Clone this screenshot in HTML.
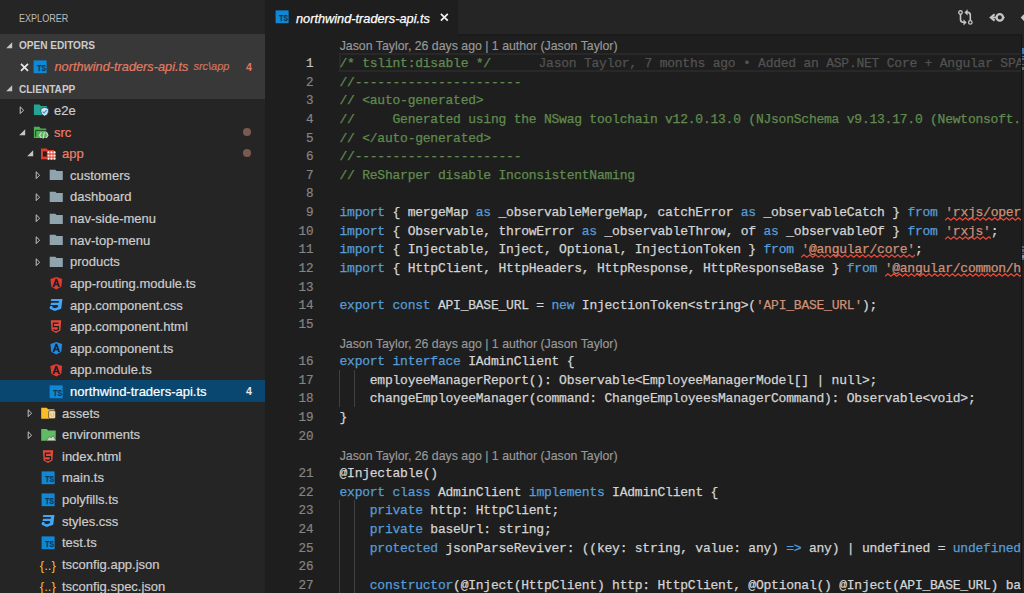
<!DOCTYPE html><html><head><meta charset="utf-8"><style>

html,body{margin:0;padding:0;}
body{width:1024px;height:593px;overflow:hidden;background:#1e1e1e;position:relative;font-family:"Liberation Sans",sans-serif;}
.abs{position:absolute;white-space:pre;}
.sb{position:absolute;left:0;top:0;width:265px;height:593px;background:#252526;overflow:hidden;}
.lbl{position:absolute;white-space:pre;font-size:13px;color:#cccccc;-webkit-text-stroke:0.2px currentColor;line-height:21.64px;height:21.64px;}
.code{position:absolute;left:339.5px;white-space:pre;font-family:"Liberation Mono",monospace;font-size:13px;letter-spacing:-0.2303px;color:#d4d4d4;-webkit-text-stroke:0.25px currentColor;height:18.69px;line-height:18.69px;}
.ln{position:absolute;left:280px;width:33.7px;text-align:right;white-space:pre;font-family:"Liberation Mono",monospace;font-size:12.62px;color:#858585;-webkit-text-stroke:0.2px currentColor;height:18.69px;line-height:18.69px;}
.k{color:#569cd6}.s{color:#ce9178}.c{color:#608b4e}
.lens{position:absolute;left:339.7px;white-space:pre;font-size:12.32px;color:#999999;-webkit-text-stroke:0.15px currentColor;height:18.69px;line-height:18.69px;}


</style></head><body>
<div class="sb">
<div class="abs" style="left:19.4px;top:0.8px;height:34.4px;line-height:34.4px;font-size:10.6px;color:#bbbbbb;transform-origin:0 50%;transform:scaleX(0.855)">EXPLORER</div>
<div class="abs" style="left:0;top:34.4px;width:265px;height:64.5px;background:#383838"></div>
<svg style="position:absolute;left:5.7px;top:42.2px" width="7" height="7" viewBox="0 0 7 7"><path d="M6.2 0.2 V6.2 H0.2 Z" fill="#c5c5c5"/></svg>
<div class="abs" style="left:18.9px;top:35.4px;height:21.64px;line-height:21.64px;font-size:10.1px;font-weight:bold;color:#cccccc">OPEN EDITORS</div>
<svg style="position:absolute;left:19.5px;top:63px" width="10" height="9" viewBox="0 0 10 9"><path d="M1 0.8 L8 7.8 M8 0.8 L1 7.8" stroke="#e8e8e8" stroke-width="1.7"/></svg>
<svg style="position:absolute;left:30.4px;top:55.8px" width="20" height="22" viewBox="0 0 20 22"><rect x="3.6" y="4.4" width="13" height="12.8" fill="#0f88d8"/><text x="15.9" y="15.3" textLength="8.6" lengthAdjust="spacingAndGlyphs" text-anchor="end" font-family="Liberation Sans" font-weight="bold" font-size="8.2" stroke="#17324d" stroke-width="0.25" fill="#17324d">TS</text></svg>
<div class="lbl" style="left:54.5px;top:56.04px;font-style:italic;font-size:12.75px;color:#e27b64">northwind-traders-api.ts</div>
<div class="lbl" style="left:193.4px;top:56.04px;font-style:italic;font-size:11px;color:#d0735d">src\app</div>
<div class="lbl" style="left:246px;top:56.6px;font-size:10.6px;font-weight:bold;-webkit-text-stroke:0px;color:#dd7a63">4</div>
<svg style="position:absolute;left:5.7px;top:85.1px" width="7" height="7" viewBox="0 0 7 7"><path d="M6.2 0.2 V6.2 H0.2 Z" fill="#c5c5c5"/></svg>
<div class="abs" style="left:18.9px;top:78.6px;height:21.64px;line-height:21.64px;font-size:10.1px;font-weight:bold;color:#cccccc">CLIENTAPP</div>
<svg style="position:absolute;left:18.9px;top:106.2px" width="6" height="9" viewBox="0 0 6 9"><path d="M1.2 0.8 L4.6 4.2 L1.2 7.6 Z" fill="none" stroke="#c5c5c5" stroke-width="1"/></svg>
<svg style="position:absolute;left:30px;top:99.3px" width="20" height="22" viewBox="0 0 20 22"><path d="M3.9 5.4 H9.5 L10.8 6.9 H16.9 V15.9 H3.9 Z" fill="#22a592"/><path d="M14.65 8.4 L18.4 9.6 V12.4 Q18.4 15.6 14.65 17.1 Q10.9 15.6 10.9 12.4 V9.6 Z" fill="#cfe6f3" stroke="#252526" stroke-width="0.6"/><path d="M12.6 12.6 L14.1 14 L16.7 11.2" stroke="#3b8fd6" stroke-width="1.2" fill="none"/></svg>
<div class="lbl" style="left:54.0px;top:100.00px;color:#cccccc">e2e</div>
<svg style="position:absolute;left:18.6px;top:128.64px" width="7" height="7" viewBox="0 0 7 7"><path d="M6.2 0.2 V6.2 H0.2 Z" fill="#c5c5c5"/></svg>
<svg style="position:absolute;left:30px;top:120.94px" width="20" height="22" viewBox="0 0 20 22"><path d="M3.9 5.8 H9.4 L10.7 7.4 H16.2 V17 H3.9 Z" fill="#4caf50"/><path d="M16.4 9.4 H5.7 V15.8" fill="none" stroke="#1f3a20" stroke-width="0.9"/><path d="M8.6 11.4 L17.8 11.4 L17 17 L6.2 17 Z" fill="#56b85a"/><path d="M11.4 11.4 L9.6 14.2 L11.4 17 M16.2 11.4 L18 14.2 L16.2 17 M14.4 10.8 L13 17.6" stroke="#d8d8d8" stroke-width="1.1" fill="none"/></svg>
<div class="lbl" style="left:54.0px;top:121.62px;color:#ea8069">src</div>
<div class="abs" style="left:243.3px;top:127.74px;width:8px;height:8px;border-radius:50%;background:#7a5a50"></div>
<svg style="position:absolute;left:26.6px;top:150.27999999999997px" width="7" height="7" viewBox="0 0 7 7"><path d="M6.2 0.2 V6.2 H0.2 Z" fill="#c5c5c5"/></svg>
<svg style="position:absolute;left:38px;top:142.57999999999998px" width="20" height="22" viewBox="0 0 20 22"><path d="M3 5.4 H8.6 L9.9 6.9 H16.1 V16.3 H3 Z" fill="#e53a2c"/><rect x="4.9" y="8.4" width="3.9" height="5.2" fill="#2a1d1d"/><rect x="9.6" y="8.6" width="8" height="7.8" fill="#ea6a5a"/><circle cx="10.5" cy="9.3" r="0.95" fill="#ffffff"/><circle cx="10.5" cy="12.6" r="0.95" fill="#ffffff"/><circle cx="10.5" cy="15.7" r="0.95" fill="#ffffff"/><circle cx="13.5" cy="9.3" r="0.95" fill="#ffffff"/><circle cx="13.5" cy="12.6" r="0.95" fill="#ffffff"/><circle cx="13.5" cy="15.7" r="0.95" fill="#ffffff"/><circle cx="16.5" cy="9.3" r="0.95" fill="#ffffff"/><circle cx="16.5" cy="12.6" r="0.95" fill="#ffffff"/><circle cx="16.5" cy="15.7" r="0.95" fill="#ffffff"/></svg>
<div class="lbl" style="left:62.0px;top:143.23px;color:#ea8069">app</div>
<div class="abs" style="left:243.3px;top:149.38px;width:8px;height:8px;border-radius:50%;background:#7a5a50"></div>
<svg style="position:absolute;left:34.9px;top:171.12px" width="6" height="9" viewBox="0 0 6 9"><path d="M1.2 0.8 L4.6 4.2 L1.2 7.6 Z" fill="none" stroke="#c5c5c5" stroke-width="1"/></svg>
<svg style="position:absolute;left:46px;top:164.22px" width="20" height="22" viewBox="0 0 20 22"><path d="M3.7 5.7 H9.3 L10.6 7.1 H16.8 V15.9 H3.7 Z" fill="#90a4ae"/></svg>
<div class="lbl" style="left:70.0px;top:164.85px;color:#cccccc">customers</div>
<svg style="position:absolute;left:34.9px;top:192.76000000000002px" width="6" height="9" viewBox="0 0 6 9"><path d="M1.2 0.8 L4.6 4.2 L1.2 7.6 Z" fill="none" stroke="#c5c5c5" stroke-width="1"/></svg>
<svg style="position:absolute;left:46px;top:185.86px" width="20" height="22" viewBox="0 0 20 22"><path d="M3.7 5.7 H9.3 L10.6 7.1 H16.8 V15.9 H3.7 Z" fill="#90a4ae"/></svg>
<div class="lbl" style="left:70.0px;top:186.47px;color:#cccccc">dashboard</div>
<svg style="position:absolute;left:34.9px;top:214.4px" width="6" height="9" viewBox="0 0 6 9"><path d="M1.2 0.8 L4.6 4.2 L1.2 7.6 Z" fill="none" stroke="#c5c5c5" stroke-width="1"/></svg>
<svg style="position:absolute;left:46px;top:207.5px" width="20" height="22" viewBox="0 0 20 22"><path d="M3.7 5.7 H9.3 L10.6 7.1 H16.8 V15.9 H3.7 Z" fill="#90a4ae"/></svg>
<div class="lbl" style="left:70.0px;top:208.09px;color:#cccccc">nav-side-menu</div>
<svg style="position:absolute;left:34.9px;top:236.04px" width="6" height="9" viewBox="0 0 6 9"><path d="M1.2 0.8 L4.6 4.2 L1.2 7.6 Z" fill="none" stroke="#c5c5c5" stroke-width="1"/></svg>
<svg style="position:absolute;left:46px;top:229.14px" width="20" height="22" viewBox="0 0 20 22"><path d="M3.7 5.7 H9.3 L10.6 7.1 H16.8 V15.9 H3.7 Z" fill="#90a4ae"/></svg>
<div class="lbl" style="left:70.0px;top:229.70px;color:#cccccc">nav-top-menu</div>
<svg style="position:absolute;left:34.9px;top:257.68px" width="6" height="9" viewBox="0 0 6 9"><path d="M1.2 0.8 L4.6 4.2 L1.2 7.6 Z" fill="none" stroke="#c5c5c5" stroke-width="1"/></svg>
<svg style="position:absolute;left:46px;top:250.78000000000003px" width="20" height="22" viewBox="0 0 20 22"><path d="M3.7 5.7 H9.3 L10.6 7.1 H16.8 V15.9 H3.7 Z" fill="#90a4ae"/></svg>
<div class="lbl" style="left:70.0px;top:251.32px;color:#cccccc">products</div>
<svg style="position:absolute;left:46px;top:272.42px" width="20" height="22" viewBox="0 0 20 22"><path d="M10.3 4.9 L16.2 7.0 L15.3 14.8 L10.3 17.4 L5.3 14.8 L4.4 7.0 Z" fill="#e23a30"/><path fill-rule="evenodd" d="M9.5 6.8 H11.1 L14.1 15 H12.2 L11.6 13.2 H9 L8.4 15 H6.5 Z M9.5 11.8 H11.1 L10.3 9.4 Z" fill="#1b2028"/></svg>
<div class="lbl" style="left:70.0px;top:272.94px;color:#cccccc">app-routing.module.ts</div>
<svg style="position:absolute;left:46px;top:294.06px" width="20" height="22" viewBox="0 0 20 22"><path d="M5.2 4.9 H16.5 L15.2 14.7 L8.8 16.9 L3.6 14.7 L4 12.1 H6.4 L6.3 13.3 L8.8 14.3 L11.8 13.3 L12.2 10.9 H4.6 L5 8.7 H12.6 L12.9 6.9 H4.9 Z" fill="#42a5f5"/></svg>
<div class="lbl" style="left:70.0px;top:294.56px;color:#cccccc">app.component.css</div>
<svg style="position:absolute;left:46px;top:315.7px" width="20" height="22" viewBox="0 0 20 22"><path d="M4.8 4.3 H15.2 L14.4 14.5 L10 16.9 L5.6 14.5 Z" fill="#e8473a"/><path d="M12.6 7.2 H7.4 V10.6 H12.4 V13.6 L9.9 14.6 L7.4 13.6" fill="none" stroke="#1e1e1e" stroke-width="1.3"/></svg>
<div class="lbl" style="left:70.0px;top:316.17px;color:#cccccc">app.component.html</div>
<svg style="position:absolute;left:46px;top:337.34000000000003px" width="20" height="22" viewBox="0 0 20 22"><path d="M10.3 4.9 L16.2 7.0 L15.3 14.8 L10.3 17.4 L5.3 14.8 L4.4 7.0 Z" fill="#1e8ae6"/><path fill-rule="evenodd" d="M9.5 6.8 H11.1 L14.1 15 H12.2 L11.6 13.2 H9 L8.4 15 H6.5 Z M9.5 11.8 H11.1 L10.3 9.4 Z" fill="#1b2028"/></svg>
<div class="lbl" style="left:70.0px;top:337.79px;color:#cccccc">app.component.ts</div>
<svg style="position:absolute;left:46px;top:358.98px" width="20" height="22" viewBox="0 0 20 22"><path d="M10.3 4.9 L16.2 7.0 L15.3 14.8 L10.3 17.4 L5.3 14.8 L4.4 7.0 Z" fill="#e23a30"/><path fill-rule="evenodd" d="M9.5 6.8 H11.1 L14.1 15 H12.2 L11.6 13.2 H9 L8.4 15 H6.5 Z M9.5 11.8 H11.1 L10.3 9.4 Z" fill="#1b2028"/></svg>
<div class="lbl" style="left:70.0px;top:359.41px;color:#cccccc">app.module.ts</div>
<div class="abs" style="left:0;top:380.12px;width:265px;height:22.14px;background:#094771"></div>
<svg style="position:absolute;left:46px;top:380.62px" width="20" height="22" viewBox="0 0 20 22"><rect x="3.6" y="4.4" width="13" height="12.8" fill="#0f88d8"/><text x="15.9" y="15.3" textLength="8.6" lengthAdjust="spacingAndGlyphs" text-anchor="end" font-family="Liberation Sans" font-weight="bold" font-size="8.2" stroke="#17324d" stroke-width="0.25" fill="#17324d">TS</text></svg>
<div class="lbl" style="left:70.0px;top:381.02px;color:#ffffff">northwind-traders-api.ts</div>
<div class="lbl" style="left:246px;top:381.22px;font-size:10.6px;font-weight:bold;-webkit-text-stroke:0px;color:#e8e8e8">4</div>
<svg style="position:absolute;left:26.9px;top:409.16px" width="6" height="9" viewBox="0 0 6 9"><path d="M1.2 0.8 L4.6 4.2 L1.2 7.6 Z" fill="none" stroke="#c5c5c5" stroke-width="1"/></svg>
<svg style="position:absolute;left:38px;top:402.26000000000005px" width="20" height="22" viewBox="0 0 20 22"><path d="M3.2 5.7 H8.8 L10.1 7.2 H16.4 V16.7 H3.2 Z" fill="#f9bd2b"/><rect x="10.6" y="8.6" width="7" height="8" rx="1.6" fill="#e9dcb8" stroke="#252526" stroke-width="0.6"/><path d="M12.6 11 Q12.4 14.6 14.6 14.8 M15.4 10.4 Q16.2 12.4 15.4 14.6" stroke="#f2b530" stroke-width="1" fill="none"/></svg>
<div class="lbl" style="left:62.0px;top:402.64px;color:#cccccc">assets</div>
<svg style="position:absolute;left:26.9px;top:430.8px" width="6" height="9" viewBox="0 0 6 9"><path d="M1.2 0.8 L4.6 4.2 L1.2 7.6 Z" fill="none" stroke="#c5c5c5" stroke-width="1"/></svg>
<svg style="position:absolute;left:38px;top:423.90000000000003px" width="20" height="22" viewBox="0 0 20 22"><path d="M3.2 5.1 H8.8 L10.1 6.6 H17.7 V16.7 H3.2 Z" fill="#60bb62"/><path d="M8.2 16.7 L11.6 12.6 L13.2 14 L15 11.6 L18.2 16.7 Z" fill="#d6d6d6" stroke="#2a4a2a" stroke-width="0.5"/></svg>
<div class="lbl" style="left:62.0px;top:424.26px;color:#cccccc">environments</div>
<svg style="position:absolute;left:38px;top:445.54px" width="20" height="22" viewBox="0 0 20 22"><path d="M4.8 4.3 H15.2 L14.4 14.5 L10 16.9 L5.6 14.5 Z" fill="#e8473a"/><path d="M12.6 7.2 H7.4 V10.6 H12.4 V13.6 L9.9 14.6 L7.4 13.6" fill="none" stroke="#1e1e1e" stroke-width="1.3"/></svg>
<div class="lbl" style="left:62.0px;top:445.88px;color:#cccccc">index.html</div>
<svg style="position:absolute;left:38px;top:467.18px" width="20" height="22" viewBox="0 0 20 22"><rect x="3.6" y="4.4" width="13" height="12.8" fill="#0f88d8"/><text x="15.9" y="15.3" textLength="8.6" lengthAdjust="spacingAndGlyphs" text-anchor="end" font-family="Liberation Sans" font-weight="bold" font-size="8.2" stroke="#17324d" stroke-width="0.25" fill="#17324d">TS</text></svg>
<div class="lbl" style="left:62.0px;top:467.49px;color:#cccccc">main.ts</div>
<svg style="position:absolute;left:38px;top:488.82px" width="20" height="22" viewBox="0 0 20 22"><rect x="3.6" y="4.4" width="13" height="12.8" fill="#0f88d8"/><text x="15.9" y="15.3" textLength="8.6" lengthAdjust="spacingAndGlyphs" text-anchor="end" font-family="Liberation Sans" font-weight="bold" font-size="8.2" stroke="#17324d" stroke-width="0.25" fill="#17324d">TS</text></svg>
<div class="lbl" style="left:62.0px;top:489.11px;color:#cccccc">polyfills.ts</div>
<svg style="position:absolute;left:38px;top:510.46000000000004px" width="20" height="22" viewBox="0 0 20 22"><path d="M5.2 4.9 H16.5 L15.2 14.7 L8.8 16.9 L3.6 14.7 L4 12.1 H6.4 L6.3 13.3 L8.8 14.3 L11.8 13.3 L12.2 10.9 H4.6 L5 8.7 H12.6 L12.9 6.9 H4.9 Z" fill="#42a5f5"/></svg>
<div class="lbl" style="left:62.0px;top:510.73px;color:#cccccc">styles.css</div>
<svg style="position:absolute;left:38px;top:532.1px" width="20" height="22" viewBox="0 0 20 22"><rect x="3.6" y="4.4" width="13" height="12.8" fill="#0f88d8"/><text x="15.9" y="15.3" textLength="8.6" lengthAdjust="spacingAndGlyphs" text-anchor="end" font-family="Liberation Sans" font-weight="bold" font-size="8.2" stroke="#17324d" stroke-width="0.25" fill="#17324d">TS</text></svg>
<div class="lbl" style="left:62.0px;top:532.35px;color:#cccccc">test.ts</div>
<svg style="position:absolute;left:38px;top:553.74px" width="20" height="22" viewBox="0 0 20 22"><text x="9.8" y="15.6" text-anchor="middle" textLength="16" lengthAdjust="spacingAndGlyphs" font-family="Liberation Sans" font-size="13.5" fill="#f7ba2a">{..}</text></svg>
<div class="lbl" style="left:62.0px;top:553.96px;color:#cccccc">tsconfig.app.json</div>
<svg style="position:absolute;left:38px;top:575.38px" width="20" height="22" viewBox="0 0 20 22"><text x="9.8" y="15.6" text-anchor="middle" textLength="16" lengthAdjust="spacingAndGlyphs" font-family="Liberation Sans" font-size="13.5" fill="#f7ba2a">{..}</text></svg>
<div class="lbl" style="left:62.0px;top:575.58px;color:#cccccc">tsconfig.spec.json</div>
</div>
<div class="abs" style="left:265px;top:0;width:759px;height:34.4px;background:#252526"></div>
<div class="abs" style="left:265px;top:0;width:193px;height:34.4px;background:#1e1e1e"></div>
<svg style="position:absolute;left:272.4px;top:5.6px" width="20" height="22" viewBox="0 0 20 22"><rect x="3.6" y="4.4" width="13" height="12.8" fill="#0f88d8"/><text x="15.9" y="15.3" textLength="8.6" lengthAdjust="spacingAndGlyphs" text-anchor="end" font-family="Liberation Sans" font-weight="bold" font-size="8.2" stroke="#17324d" stroke-width="0.25" fill="#17324d">TS</text></svg>
<div class="abs" style="left:296px;top:1.6px;height:34.4px;line-height:34.4px;font-size:12.75px;font-style:italic;color:#ffffff;-webkit-text-stroke:0.25px currentColor">northwind-traders-api.ts</div>
<svg style="position:absolute;left:440px;top:13.4px" width="9" height="8.5" viewBox="0 0 9 8.5"><path d="M0.9 0.9 L7.8 7.6 M7.8 0.9 L0.9 7.6" stroke="#f0f0f0" stroke-width="1.8"/></svg>
<svg style="position:absolute;left:954px;top:6px" width="24" height="22" viewBox="0 0 24 22"><circle cx="6.5" cy="6.5" r="1.75" fill="none" stroke="#c5c5c5" stroke-width="1.3"/><path d="M6.5 8.2 V13.6 Q6.5 16.2 9 16.2 H10.4" fill="none" stroke="#c5c5c5" stroke-width="1.6"/><path d="M9.5 13.2 L12.6 16.4 L9.5 19.6 Z" fill="#c5c5c5"/><circle cx="16.3" cy="16.4" r="1.75" fill="none" stroke="#c5c5c5" stroke-width="1.3"/><path d="M16.3 14.7 V9.2 Q16.3 6.4 13.6 6.4 H12.6" fill="none" stroke="#c5c5c5" stroke-width="1.6"/><path d="M13.6 3.2 L10.4 6.4 L13.6 9.6 Z" fill="#c5c5c5"/></svg>
<svg style="position:absolute;left:986px;top:8px" width="24" height="20" viewBox="0 0 24 20"><path d="M8.6 6.2 L4.8 9.4 L8.6 12.6" fill="none" stroke="#c5c5c5" stroke-width="2.1"/><path d="M5.5 9.4 H10" stroke="#c5c5c5" stroke-width="1.8"/><circle cx="13.8" cy="9.4" r="3.2" fill="none" stroke="#c5c5c5" stroke-width="2.3"/><path d="M16.4 7.2 L19 9.4 L16.4 11.6 Z" fill="#c5c5c5"/></svg>
<svg style="position:absolute;left:1008px;top:8px" width="16" height="20" viewBox="0 0 16 20"><path d="M12.7 9.6 L15.6 6.4 H16 V12.8 H15.6 Z" fill="#c5c5c5"/></svg>
<div class="abs" style="left:265px;top:34.4px;width:756.5px;height:558.6px;overflow:hidden">
<div class="abs" style="left:74.2px;top:18.64px;width:700px;height:14.64px;border-top:2px solid #282828;border-bottom:2px solid #282828;border-left:2px solid #282828"></div>
<div class="lens" style="left:74.7px;top:2.30px">Jason Taylor, 26 days ago | 1 author (Jason Taylor)</div>
<div class="lens" style="left:74.7px;top:300.48px">Jason Taylor, 26 days ago | 1 author (Jason Taylor)</div>
<div class="lens" style="left:74.7px;top:412.29px">Jason Taylor, 26 days ago | 1 author (Jason Taylor)</div>
<div class="abs" style="left:74.20px;top:335.45px;width:1px;height:37.27px;background:#404040"></div>
<div class="abs" style="left:89.34px;top:335.45px;width:1px;height:37.27px;background:#404040"></div>
<div class="abs" style="left:74.20px;top:465.90px;width:1px;height:93.18px;background:#404040"></div>
<div class="abs" style="left:89.34px;top:465.90px;width:1px;height:93.18px;background:#404040"></div>
<div class="ln" style="left:15px;top:20.61px;color:#c6c6c6">1</div>
<div class="code" style="left:74.5px;top:20.61px"><span class="c">/* tslint:disable */</span></div>
<div class="ln" style="left:15px;top:39.24px;color:#858585">2</div>
<div class="code" style="left:74.5px;top:39.24px"><span class="c">//----------------------</span></div>
<div class="ln" style="left:15px;top:57.88px;color:#858585">3</div>
<div class="code" style="left:74.5px;top:57.88px"><span class="c">// &lt;auto-generated&gt;</span></div>
<div class="ln" style="left:15px;top:76.51px;color:#858585">4</div>
<div class="code" style="left:74.5px;top:76.51px"><span class="c">//     Generated using the NSwag toolchain v12.0.13.0 (NJsonSchema v9.13.17.0 (Newtonsoft.Json v11.0.0.0))</span></div>
<div class="ln" style="left:15px;top:95.15px;color:#858585">5</div>
<div class="code" style="left:74.5px;top:95.15px"><span class="c">// &lt;/auto-generated&gt;</span></div>
<div class="ln" style="left:15px;top:113.79px;color:#858585">6</div>
<div class="code" style="left:74.5px;top:113.79px"><span class="c">//----------------------</span></div>
<div class="ln" style="left:15px;top:132.42px;color:#858585">7</div>
<div class="code" style="left:74.5px;top:132.42px"><span class="c">// ReSharper disable InconsistentNaming</span></div>
<div class="ln" style="left:15px;top:151.06px;color:#858585">8</div>
<div class="code" style="left:74.5px;top:151.06px"></div>
<div class="ln" style="left:15px;top:169.69px;color:#858585">9</div>
<div class="code" style="left:74.5px;top:169.69px"><span class="k">import</span> { mergeMap <span class="k">as</span> _observableMergeMap, catchError <span class="k">as</span> _observableCatch } <span class="k">from</span> <span class="s sq">&#x27;rxjs/operators&#x27;</span>;</div>
<svg style="position:absolute;left:680.10px;top:182.62px;overflow:hidden" width="121.12" height="4.2"><polyline points="0.00,3.2 2.93,0.8 5.86,3.2 8.79,0.8 11.72,3.2 14.65,0.8 17.58,3.2 20.51,0.8 23.44,3.2 26.37,0.8 29.30,3.2 32.23,0.8 35.16,3.2 38.09,0.8 41.02,3.2 43.95,0.8 46.88,3.2 49.81,0.8 52.74,3.2 55.67,0.8 58.60,3.2 61.53,0.8 64.46,3.2 67.39,0.8 70.32,3.2 73.25,0.8 76.18,3.2 79.11,0.8 82.04,3.2 84.97,0.8 87.90,3.2 90.83,0.8 93.76,3.2 96.69,0.8 99.62,3.2 102.55,0.8 105.48,3.2 108.41,0.8 111.34,3.2 114.27,0.8 117.20,3.2 120.13,0.8 123.06,3.2 125.99,0.8" fill="none" stroke="#ee4a3c" stroke-width="1.25"/></svg>
<div class="ln" style="left:15px;top:188.33px;color:#858585">10</div>
<div class="code" style="left:74.5px;top:188.33px"><span class="k">import</span> { Observable, throwError <span class="k">as</span> _observableThrow, of <span class="k">as</span> _observableOf } <span class="k">from</span> <span class="s sq">&#x27;rxjs&#x27;</span>;</div>
<svg style="position:absolute;left:680.10px;top:201.26px;overflow:hidden" width="45.42" height="4.2"><polyline points="0.00,3.2 2.93,0.8 5.86,3.2 8.79,0.8 11.72,3.2 14.65,0.8 17.58,3.2 20.51,0.8 23.44,3.2 26.37,0.8 29.30,3.2 32.23,0.8 35.16,3.2 38.09,0.8 41.02,3.2 43.95,0.8 46.88,3.2 49.81,0.8" fill="none" stroke="#ee4a3c" stroke-width="1.25"/></svg>
<div class="ln" style="left:15px;top:206.97px;color:#858585">11</div>
<div class="code" style="left:74.5px;top:206.97px"><span class="k">import</span> { Injectable, Inject, Optional, InjectionToken } <span class="k">from</span> <span class="s sq">&#x27;@angular/core&#x27;</span>;</div>
<svg style="position:absolute;left:536.27px;top:219.90px;overflow:hidden" width="113.55" height="4.2"><polyline points="0.00,3.2 2.93,0.8 5.86,3.2 8.79,0.8 11.72,3.2 14.65,0.8 17.58,3.2 20.51,0.8 23.44,3.2 26.37,0.8 29.30,3.2 32.23,0.8 35.16,3.2 38.09,0.8 41.02,3.2 43.95,0.8 46.88,3.2 49.81,0.8 52.74,3.2 55.67,0.8 58.60,3.2 61.53,0.8 64.46,3.2 67.39,0.8 70.32,3.2 73.25,0.8 76.18,3.2 79.11,0.8 82.04,3.2 84.97,0.8 87.90,3.2 90.83,0.8 93.76,3.2 96.69,0.8 99.62,3.2 102.55,0.8 105.48,3.2 108.41,0.8 111.34,3.2 114.27,0.8 117.20,3.2" fill="none" stroke="#ee4a3c" stroke-width="1.25"/></svg>
<div class="ln" style="left:15px;top:225.60px;color:#858585">12</div>
<div class="code" style="left:74.5px;top:225.60px"><span class="k">import</span> { HttpClient, HttpHeaders, HttpResponse, HttpResponseBase } <span class="k">from</span> <span class="s sq">&#x27;@angular/common/http&#x27;</span>;</div>
<svg style="position:absolute;left:619.54px;top:238.53px;overflow:hidden" width="166.54" height="4.2"><polyline points="0.00,3.2 2.93,0.8 5.86,3.2 8.79,0.8 11.72,3.2 14.65,0.8 17.58,3.2 20.51,0.8 23.44,3.2 26.37,0.8 29.30,3.2 32.23,0.8 35.16,3.2 38.09,0.8 41.02,3.2 43.95,0.8 46.88,3.2 49.81,0.8 52.74,3.2 55.67,0.8 58.60,3.2 61.53,0.8 64.46,3.2 67.39,0.8 70.32,3.2 73.25,0.8 76.18,3.2 79.11,0.8 82.04,3.2 84.97,0.8 87.90,3.2 90.83,0.8 93.76,3.2 96.69,0.8 99.62,3.2 102.55,0.8 105.48,3.2 108.41,0.8 111.34,3.2 114.27,0.8 117.20,3.2 120.13,0.8 123.06,3.2 125.99,0.8 128.92,3.2 131.85,0.8 134.78,3.2 137.71,0.8 140.64,3.2 143.57,0.8 146.50,3.2 149.43,0.8 152.36,3.2 155.29,0.8 158.22,3.2 161.15,0.8 164.08,3.2 167.01,0.8 169.94,3.2" fill="none" stroke="#ee4a3c" stroke-width="1.25"/></svg>
<div class="ln" style="left:15px;top:244.24px;color:#858585">13</div>
<div class="code" style="left:74.5px;top:244.24px"></div>
<div class="ln" style="left:15px;top:262.87px;color:#858585">14</div>
<div class="code" style="left:74.5px;top:262.87px"><span class="k">export</span> <span class="k">const</span> API_BASE_URL = <span class="k">new</span> InjectionToken&lt;string&gt;(<span class="s">&#x27;API_BASE_URL&#x27;</span>);</div>
<div class="ln" style="left:15px;top:281.51px;color:#858585">15</div>
<div class="code" style="left:74.5px;top:281.51px"></div>
<div class="ln" style="left:15px;top:318.78px;color:#858585">16</div>
<div class="code" style="left:74.5px;top:318.78px"><span class="k">export</span> <span class="k">interface</span> IAdminClient {</div>
<div class="ln" style="left:15px;top:337.42px;color:#858585">17</div>
<div class="code" style="left:74.5px;top:337.42px">    employeeManagerReport(): Observable&lt;EmployeeManagerModel[] | null&gt;;</div>
<div class="ln" style="left:15px;top:356.05px;color:#858585">18</div>
<div class="code" style="left:74.5px;top:356.05px">    changeEmployeeManager(command: ChangeEmployeesManagerCommand): Observable&lt;void&gt;;</div>
<div class="ln" style="left:15px;top:374.69px;color:#858585">19</div>
<div class="code" style="left:74.5px;top:374.69px">}</div>
<div class="ln" style="left:15px;top:393.33px;color:#858585">20</div>
<div class="code" style="left:74.5px;top:393.33px"></div>
<div class="ln" style="left:15px;top:430.60px;color:#858585">21</div>
<div class="code" style="left:74.5px;top:430.60px">@Injectable()</div>
<div class="ln" style="left:15px;top:449.23px;color:#858585">22</div>
<div class="code" style="left:74.5px;top:449.23px"><span class="k">export</span> <span class="k">class</span> AdminClient <span class="k">implements</span> IAdminClient {</div>
<div class="ln" style="left:15px;top:467.87px;color:#858585">23</div>
<div class="code" style="left:74.5px;top:467.87px">    <span class="k">private</span> http: HttpClient;</div>
<div class="ln" style="left:15px;top:486.51px;color:#858585">24</div>
<div class="code" style="left:74.5px;top:486.51px">    <span class="k">private</span> baseUrl: string;</div>
<div class="ln" style="left:15px;top:505.14px;color:#858585">25</div>
<div class="code" style="left:74.5px;top:505.14px">    <span class="k">protected</span> jsonParseReviver: ((key: string, value: any) <span class="k">=&gt;</span> any) | undefined = <span class="k">undefined</span>;</div>
<div class="ln" style="left:15px;top:523.78px;color:#858585">26</div>
<div class="code" style="left:74.5px;top:523.78px"></div>
<div class="ln" style="left:15px;top:542.41px;color:#858585">27</div>
<div class="code" style="left:74.5px;top:542.41px">    <span class="k">constructor</span>(@Inject(HttpClient) http: HttpClient, @Optional() @Inject(API_BASE_URL) baseUrl?: string) {</div>
<div class="code" style="left:273.5px;top:20.61px;color:#525252">Jason Taylor, 7 months ago • Added an ASP.NET Core + Angular SPA app</div>
</div>
<div class="abs" style="left:458px;top:34.3px;width:563px;height:1.5px;background:#1b1b1b"></div>
<div class="abs" style="left:1021px;top:34.4px;width:3px;height:558.6px;background:#232323;border-left:1px solid #141414"></div>
<div class="abs" style="left:1022px;top:47.9px;width:2px;height:6px;background:#3a78b0"></div>
<div class="abs" style="left:1022px;top:55.6px;width:2px;height:1.4px;background:#3a78b0"></div>
<div class="abs" style="left:1022px;top:58.3px;width:2px;height:1.4px;background:#4a6a88"></div>
<div class="abs" style="left:1022px;top:63.7px;width:2px;height:1.3px;background:#555f68"></div>
<div class="abs" style="left:1022px;top:67.1px;width:2px;height:3.4px;background:#5a6a78"></div>
<div class="abs" style="left:1022px;top:246px;width:2px;height:2px;background:#5a6068"></div>
<div class="abs" style="left:1022px;top:249px;width:2px;height:3px;background:#3a6a98"></div>
<div class="abs" style="left:1022px;top:252.5px;width:2px;height:1.5px;background:#5a6068"></div>
<div class="abs" style="left:1022px;top:255px;width:2px;height:3px;background:#8a9098"></div>
<div class="abs" style="left:1022px;top:258px;width:2px;height:1.5px;background:#3a6a98"></div>
</body></html>
